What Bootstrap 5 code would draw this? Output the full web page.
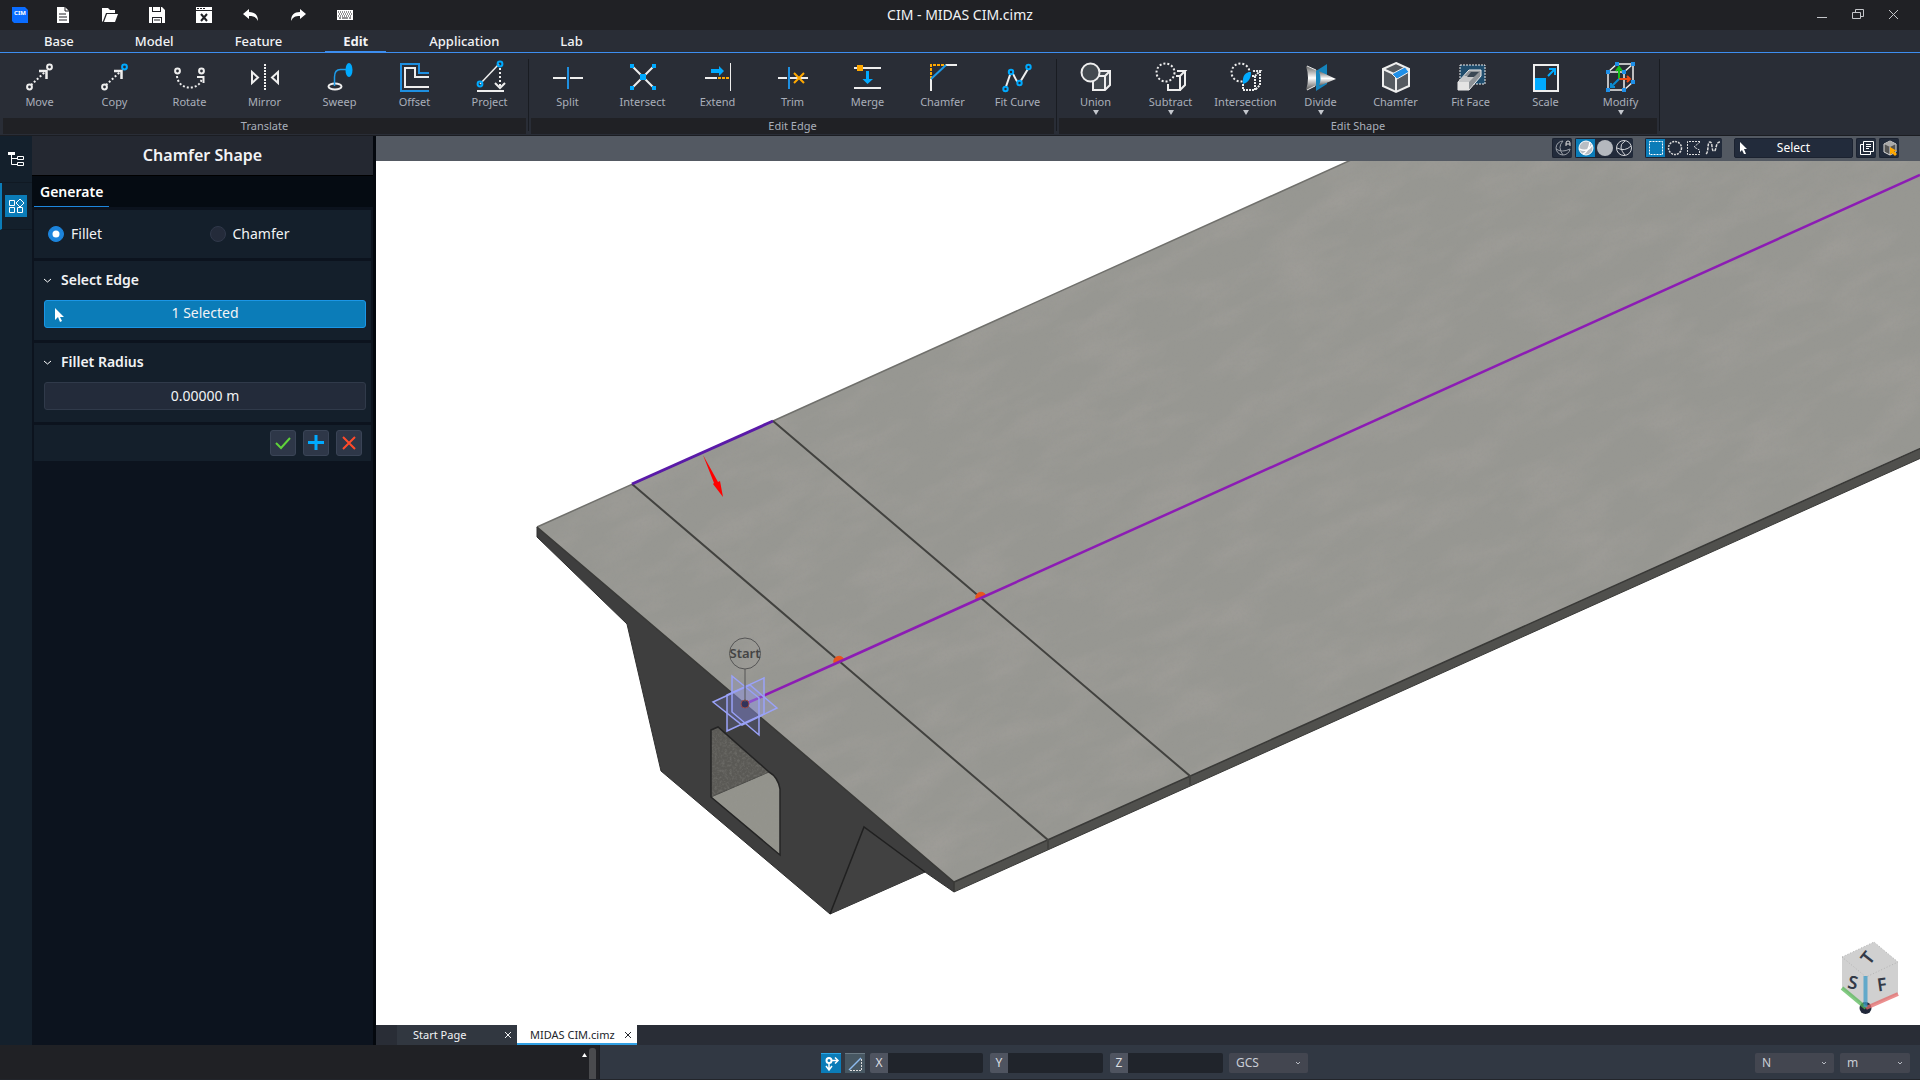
<!DOCTYPE html>
<html lang="en">
<head>
<meta charset="utf-8">
<meta name="viewport" content="width=device-width, initial-scale=1">
<title>CIM - MIDAS CIM.cimz</title>
<link rel="stylesheet" href="https://cdn.jsdelivr.net/npm/bootstrap@5.3.0/dist/css/bootstrap.min.css">
<style>
  body { font-family: "Noto Sans", "Open Sans", sans-serif; font-size: 14px; line-height: 20px; background: #0c131e; color: #f2f3f5; overflow: hidden; }
  button, input, select { font-family: inherit; }
  svg { display: block; overflow: visible; }
  .app-title { background: #202125; height: 30px; padding-left: 12px; }
  .app-title .btn, .win-controls .btn { border: 0; border-radius: 0; color: #fff; }
  .app-title .quick { width: 47px; }
  .quick-bar { margin-left: 11px; }
  .app-name { font-size: 14px; pointer-events: none; }
  .win-controls { padding-right: 8px; }
  .win-controls .btn { width: 36px; color: #c4c6ca; }
  .menu-bar { background: #292d36; height: 23px; padding-left: 26px; gap: 25px; border-bottom: 1px solid #3d8ef0; }
  .menu-bar .nav-link { color: #f2f3f5; padding: 0 18px; font-size: 13px; font-weight: 500; line-height: 22px; height: 22px; }
  .menu-bar .nav-link.active { font-weight: 700; box-shadow: 0 -1px 0 #3d8ef0 inset; }
  .ribbon { background: #292d36; height: 83px; padding: 6px 2px 0; border-bottom: 1px solid #1b1d22; }
  .ribbon-group { padding-right: 3px; background: linear-gradient(#191c22, #191c22) right 1px top 0 / 1px 72px no-repeat; }
  .tool { width: 75px; height: 59px; padding: 3px 0 0; border: 0; border-radius: 0; color: #a9afba; font-size: 11px; line-height: 16px; display: flex; flex-direction: column; align-items: center; justify-content: flex-start; }
  .tool:hover { background: #343a46; color: #fff; }
  .tool svg { margin-bottom: 2px; flex-shrink: 0; }
  .tool .drop { display: block; width: 0; border: 3px solid transparent; border-top: 5px solid #c4c7cd; border-bottom: 0; }
  .group-name { background: #202125; color: #a9afba; font-size: 11px; line-height: 16px; height: 16px; margin: 0 1px; }
  .work { min-height: 0; }
  .rail { width: 32px; background: #14202c; }
  .rail .btn { height: 47px; width: 32px; padding: 0; border: 0; border-bottom: 1px solid #101923; border-radius: 0; color: #fff; display: flex; align-items: center; justify-content: center; }
  .rail .active { border-left: 2px solid #0b7cb8; padding-right: 2px; background: transparent; }
  .rail .tile { background: #0b7cb8; padding: 3px; }
  .side { width: 344px; background: #0c131e; border-right: 3px solid #04080e; }
  .side-title { background: #242831; height: 40px; border-bottom: 1px solid #000; font-size: 16px; line-height: 38px; font-weight: 600; }
  .side-tabs { background: #050b12; height: 31px; padding-left: 2px; }
  .side-tabs .nav-link { color: #fff; font-weight: 600; padding: 0 7px 0 6px; width: 75px; line-height: 32px; height: 31px; border-bottom: 1px solid #1e86dc; }
  .panel-stack { gap: 3px; padding: 3px 2px 0; }
  .pane { background: #141f2b; padding: 9px 5px 12px 10px; }
  .pane.kinds { padding: 0 0 0 14px; height: 48px; }
  .pane.actions { gap: 7px; padding: 5px 9px; }
  .pane-head { font-weight: 600; font-size: 14px; line-height: 20px; color: #f2f3f5; gap: 10px; margin-bottom: 10px; }
  .pane .form-check-input { width: 16px; height: 16px; margin: 0; background-color: #242b3a; border: 1px solid #30384a; box-shadow: none; }
  .pane .form-check-input:checked { background-color: #1c84dc; border-color: #1c84dc; }
  .opt { width: 162px; gap: 7px; }
  .field { height: 28px; font-size: 14px; line-height: 20px; padding: 2px 8px 4px; border-radius: 3px; color: #f2f3f5; }
  .pick { background: #0b7cb8; border: 1px solid #1b96e6; }
  .pick:hover { background: #0d86c6; color: #fff; }
  .pick svg { position: absolute; left: 8px; top: 6px; }
  .value-box, .value-box:focus { background: #232b3a; border: 1px solid #303a4a; color: #f2f3f5; box-shadow: none; }
  .act { width: 26px; height: 26px; padding: 0; background: #2e3748; border: 1px solid #3a4456; border-radius: 3px; display: flex; align-items: center; justify-content: center; }
  .view-bar { background: #535962; height: 25px; padding: 2px 21px 3px 0; gap: 3px; }
  .chipset { background: #222b3b; border: 1px solid #1b2230; border-right: 0; border-radius: 2px; height: 20px; }
  .chipset.spaced { margin-right: 9px; }
  .chipset .btn { width: 19px; height: 18px; padding: 0; border: 0; border-radius: 0; display: flex; align-items: center; justify-content: center; color: #d8dade; }
  .chipset .btn.active { background: #0b7cb8; }
  .mode { width: 119px; height: 20px; padding: 0; background: #222b3b; border: 1px solid #1b2230; border-radius: 2px; color: #fff; font-size: 12px; line-height: 16px; }
  .mode svg { position: absolute; left: 4px; top: 3px; }
  .canvas-col { min-width: 0; }
  .canvas { background: #fff; min-height: 0; }
  .canvas .model { position: absolute; inset: 0; width: 100%; height: 100%; }
  .canvas .compass { position: absolute; right: 20px; bottom: 10px; }
  .doc-tabs { background: #292d36; height: 20px; padding-left: 21px; }
  .doc { font-size: 11px; line-height: 20px; height: 20px; width: 120px; padding: 0 5px 0 16px; background: #313740; color: #f2f3f5; }
  .doc a { color: inherit; text-decoration: none; }
  .doc.current { background: #fff; color: #22252b; box-shadow: 0 -2px 0 #31a0e4 inset; padding-left: 13px; }
  .doc .btn { padding: 0; border: 0; color: inherit; line-height: 0; }
  .status { height: 35px; background: #313843; border-bottom: 1px solid #22252b; }
  .status-tools { padding-left: 221px; }
  .console { width: 600px; background: #202125; padding: 3px 3px 0 0; border-right: 1px solid #1b1d22; gap: 2px; }
  .console .thumb { width: 7px; border-radius: 3px 3px 0 0; background: #4a4b4e; }
  .snap { width: 20px; height: 20px; padding: 0; border: 0; border-top: 1px solid #6b7a84; border-radius: 0; background: #475762; display: flex; align-items: center; justify-content: center; }
  .snap.active { background: #0b7cb8; border-color: #2aa6e6; }
  .axes { gap: 7px; margin: 0 6px 0 5px; }
  .axis { width: 113px; height: 20px; }
  .axis label { width: 18px; background: #4f5460; font-size: 12px; line-height: 20px; text-align: center; border-radius: 2px 0 0 2px; color: #dcdee2; flex-shrink: 0; }
  .axis .form-control { background: #20242b; border: 0; padding: 0 4px; min-height: 0; color: #fff; font-size: 12px; border-radius: 0 2px 2px 0; }
  .unit { --bs-form-select-bg-img: url("data:image/svg+xml,%3csvg xmlns='http://www.w3.org/2000/svg' viewBox='0 0 6 4'%3e%3cpath fill='none' stroke='%23b9bcc4' d='M1 1l2 2 2-2'/%3e%3c/svg%3e"); height: 20px; width: 79px; padding: 0 16px 0 7px; background-color: #434650; background-position: right 7px center; background-size: 6px 4px; border: 0; border-radius: 2px; color: #c9cdd5; font-size: 12px; line-height: 18px; }
  .unit.short { width: 70px; margin: 0 10px 0 6px; }
</style>
</head>
<body>
<div class="d-flex flex-column vh-100">

  <header class="app-title d-flex align-items-stretch position-relative">
    <svg class="align-self-center" width="16" height="16" viewBox="0 0 16 16"><path d="M0 0h13l3 3v13H2l-2-2z" fill="#0a6cff"/><text x="8" y="8" font-size="6" font-weight="700" fill="#fff" text-anchor="middle">CIM</text></svg>
    <div class="d-flex position-absolute start-0 end-0 justify-content-center align-items-center h-100 app-name">CIM - MIDAS CIM.cimz</div>
    <div class="quick-bar d-flex">
      <button class="btn quick p-0" aria-label="New"><svg class="mx-auto" width="16" height="16"><path d="M2 0h8l4 4v12H2z" fill="#fff"/><path d="M10 0v4h4M4 7h7M4 10h8M4 13h8" stroke="#202125" fill="none"/></svg></button>
      <button class="btn quick p-0" aria-label="Open"><svg class="mx-auto" width="16" height="16"><path d="M0 15V1h6l2 2h5v3H4L1 14z" fill="#fff"/><path d="M5 7h11l-3 8H2z" fill="#fff"/></svg></button>
      <button class="btn quick p-0" aria-label="Save"><svg class="mx-auto" width="16" height="16"><path d="M0 0h3v5h9V0h1l3 3v13h-3v-6H3v6H0z" fill="#fff"/><path d="M4 0h7v4H4zM4 11h8v5H4z" fill="#fff"/><path d="M5 13h6" stroke="#202125"/></svg></button>
      <button class="btn quick p-0" aria-label="Close file"><svg class="mx-auto" width="16" height="16"><path d="M0 0h16v3H0zM0 4h16v12H0z" fill="#fff"/><path d="M1 1.500h2M4 1.500h2M7 1.500h2" stroke="#202125"/><path d="M5 7l6 7M11 7l-6 7" stroke="#202125" stroke-width="2"/></svg></button>
      <button class="btn quick p-0" aria-label="Undo"><svg class="mx-auto" width="16" height="16"><path d="M0 7l6-5v3c6 0 9 3 9 9-2-4-4-5-9-5v3z" fill="#fff"/></svg></button>
      <button class="btn quick p-0" aria-label="Redo"><svg class="mx-auto" width="16" height="16"><path d="M16 7l-6-5v3C4 5 1 8 1 14c2-4 4-5 9-5v3z" fill="#fff"/></svg></button>
      <button class="btn quick p-0" aria-label="Keyboard"><svg class="mx-auto" width="16" height="16"><path d="M0 3h16v10H0z" fill="#fff"/><path d="M1 5h14M2 7h13M1 9h14" stroke="#202125" stroke-dasharray="1 1"/><path d="M2 11h2M5 11h6M12 11h2" stroke="#202125"/></svg></button>
    </div>
    <div class="win-controls d-flex ms-auto">
      <button class="btn p-0" aria-label="Minimize"><svg class="mx-auto" width="12" height="12"><path d="M1 8.500h10" stroke="currentColor"/></svg></button>
      <button class="btn p-0" aria-label="Restore"><svg class="mx-auto" width="12" height="12"><path d="M3.500 3.500v-3h8v7h-3M.5 3.500h8v6h-8z" fill="none" stroke="currentColor"/></svg></button>
      <button class="btn p-0" aria-label="Close"><svg class="mx-auto" width="12" height="12"><path d="M1 1l9 9M10 1l-9 9" stroke="currentColor"/></svg></button>
    </div>
  </header>

  <nav class="menu-bar nav flex-nowrap">
    <a class="nav-link" href="#">Base</a>
    <a class="nav-link" href="#">Model</a>
    <a class="nav-link" href="#">Feature</a>
    <a class="nav-link active" href="#" aria-current="page">Edit</a>
    <a class="nav-link" href="#">Application</a>
    <a class="nav-link" href="#">Lab</a>
  </nav>

  <section class="ribbon d-flex" aria-label="Edit tools">
    <div class="ribbon-group">
      <div class="d-flex">
        <button class="btn tool"><svg width="30" height="30" fill="none" stroke="#eee" stroke-width="2"><path d="M6 23L20 10" stroke-dasharray="2 2"/><circle cx="4.500" cy="25" r="2.400"/><circle cx="24.500" cy="5" r="2.400"/><path d="M14 9h7.500v8" stroke-width="2.500"/></svg>Move</button>
        <button class="btn tool"><svg width="30" height="30" fill="none" stroke="#eee" stroke-width="2"><path d="M6 23L20 10" stroke-dasharray="2 2"/><circle cx="4.500" cy="25" r="2.400"/><circle cx="24.500" cy="5" r="2.400" stroke="#00aaff"/><path d="M14 9h7.500v8" stroke-width="2.500"/></svg>Copy</button>
        <button class="btn tool"><svg width="30" height="30" fill="none" stroke="#eee" stroke-width="2"><circle cx="2.500" cy="9" r="2.400"/><circle cx="26.500" cy="9" r="2.400"/><path d="M2 14c1 15 23 15 25 2" stroke-dasharray="2 2"/><path d="M22 15h6.500v6" /></svg>Rotate</button>
        <button class="btn tool"><svg width="30" height="30" fill="none" stroke="#eee" stroke-width="2"><path d="M15 2v27" stroke-dasharray="2 1"/><path d="M2 10v11l6-5.500zM28 10v11l-6-5.500z"/></svg>Mirror</button>
        <button class="btn tool"><svg width="30" height="30" fill="none" stroke="#eee"><ellipse cx="10" cy="24.500" rx="6.500" ry="3" stroke-width="2"/><path d="M9.500 24V15q0-7.500 6-7.500h6" stroke="#1e9be8" stroke-width="1.500"/><ellipse cx="24" cy="8" rx="3.500" ry="7" fill="#00aaff" stroke="none"/></svg>Sweep</button>
        <button class="btn tool"><svg width="30" height="30" fill="none" stroke="#eee" stroke-width="2"><path d="M29 29H1V2h18v9h10" stroke="#1e8fe0"/><path d="M29 25H5V6h10v9h14"/></svg>Offset</button>
        <button class="btn tool"><svg width="30" height="30" fill="none" stroke="#eee" stroke-width="2"><path d="M5 22L24 2" stroke-width="1.500"/><circle cx="5" cy="22" r="2.400" stroke="#00aaff"/><circle cx="25" cy="2" r="2.400" stroke="#00aaff"/><path d="M25 6v20" stroke-dasharray="2 2"/><path d="M20 21l5 5 5-5M2 29h27"/></svg>Project</button>
      </div>
      <div class="group-name text-center">Translate</div>
    </div>
    <div class="ribbon-group">
      <div class="d-flex">
        <button class="btn tool"><svg width="30" height="30" stroke="#eee" stroke-width="2"><path d="M0 16h13M17 16h13"/><path d="M15 5v22" stroke="#1e8fe0"/></svg>Split</button>
        <button class="btn tool"><svg width="30" height="30" stroke="#eee" stroke-width="2"><path d="M4 4l22 22M26 4L4 26"/><path d="M2 2h4v4H2zM24 2h4v4h-4zM2 24h4v4H2zM24 24h4v4h-4zM12 12h6v6h-6z" fill="#00aaff" stroke="none"/></svg>Intersect</button>
        <button class="btn tool"><svg width="30" height="30" stroke="#eee" stroke-width="2"><path d="M2 16h12"/><path d="M27.500 1v28" stroke-width="1"/><path d="M15 16h12" stroke="#ffa800" stroke-dasharray="3 1"/><path d="M8 7h8V4l5 5-5 5v-3H8z" fill="#00aaff" stroke="none"/></svg>Extend</button>
        <button class="btn tool"><svg width="30" height="30" stroke="#eee" stroke-width="2"><path d="M0 16h9M12 16h18"/><path d="M11 5v22" stroke="#1e8fe0"/><path d="M16 11l10 10M26 11L16 21" stroke="#ffa800"/></svg>Trim</button>
        <button class="btn tool"><svg width="30" height="30" stroke="#eee" stroke-width="2"><path d="M1 6h27M1 26h27"/><path d="M4 3h6v6H4z" fill="#ffa800" stroke="none"/><path d="M13 9h3v8h4l-5.500 5-5-5H13z" fill="#00aaff" stroke="none"/></svg>Merge</button>
        <button class="btn tool"><svg width="30" height="30" fill="none" stroke="#eee" stroke-width="2"><path d="M3 17V3h15" stroke="#ffa800" stroke-dasharray="3 1"/><path d="M18 3h11M3 17v12"/><path d="M3 17L18 3" stroke="#1e9be8"/></svg>Chamfer</button>
        <button class="btn tool"><svg width="30" height="30" fill="none" stroke="#00aaff" stroke-width="2"><path d="M2.500 26L8 10c3 0 4 10 8.500 11L25.500 6" stroke="#eee"/><g fill="#292d36"><circle cx="2.500" cy="27" r="2.200"/><circle cx="8" cy="10" r="2.200"/><circle cx="16.500" cy="21" r="2.200"/><circle cx="25.500" cy="5" r="2.200"/></g></svg>Fit Curve</button>
      </div>
      <div class="group-name text-center">Edit Edge</div>
    </div>
    <div class="ribbon-group">
      <div class="d-flex">
        <button class="btn tool"><svg width="30" height="30" fill="#444a50" stroke="#eee" stroke-width="2"><path d="M12 14l5-5h12v14l-5 5H12zM12 14h12v14M24 14l5-5"/><circle cx="9.500" cy="10.500" r="9"/></svg>Union<span class="drop"></span></button>
        <button class="btn tool"><svg width="30" height="30" fill="none" stroke="#eee" stroke-width="2"><path d="M12 22v6h12V14h-4M24 14l5-5h-8M29 9v14l-5 5"/><circle cx="9.500" cy="10.500" r="9" stroke-dasharray="2 2"/></svg>Subtract<span class="drop"></span></button>
        <button class="btn tool"><svg width="30" height="30" fill="none" stroke="#eee" stroke-width="2"><path d="M12 22v6h12V14h-4M24 14l5-5h-8M29 9v14l-5 5" stroke-dasharray="2 1"/><circle cx="9.500" cy="10.500" r="9" stroke-dasharray="2 2"/><path d="M12 22c-1-8 2-12 8-12 0 6-2 10-8 12z" fill="#00aaff" stroke="none"/></svg>Intersection<span class="drop"></span></button>
        <button class="btn tool"><svg width="30" height="30"><defs><linearGradient id="cone" x2="0" y2="1"><stop offset="0" stop-color="#666"/><stop offset=".5" stop-color="#fff"/><stop offset="1" stop-color="#555"/></linearGradient></defs><path d="M0 4l12 5v14L0 28Q4 16 0 4z" fill="url(#cone)"/><path d="M10 9l11-7v20l-11 7z" fill="#1584bd"/><path d="M13 9l17 8-17 7q3-7 0-15z" fill="url(#cone)"/><path d="M1 4l9 4M1 28l8-4" stroke="#eee"/></svg>Divide<span class="drop"></span></button>
        <button class="btn tool"><svg width="30" height="30" fill="#555a60" stroke="#eee" stroke-width="2"><path d="M15 1l13 6v17l-13 6-13-6V7z"/><path d="M2 7l13 6v17M15 13l13-6" fill="none"/><path d="M11 12L24 5l4 5-12 7z" fill="#1e8fe8" stroke-width="1"/></svg>Chamfer</button>
        <button class="btn tool"><svg width="30" height="30"><path d="M4 3h25v19H4z" fill="#204d6d" stroke="#eee" stroke-dasharray="2 1"/><path d="M2 20L13 8h12v6L13 28H2z" fill="#8d9297" stroke="#eee"/><path d="M2 20h11v8H2z" fill="#e4e4e4"/><path d="M2 20l6-6h11l-6 6z" fill="#c6c8ca"/><path d="M15 10h8l-5 5h-7z" fill="#394754"/></svg>Fit Face</button>
        <button class="btn tool"><svg width="30" height="30" fill="none" stroke="#eee" stroke-width="2"><path d="M3 3h24v26H3z"/><path d="M4 16h11v12H4z" fill="#00aaff" stroke="none"/><path d="M17 14l7-7M18 7h6v6" stroke="#00aaff"/></svg>Scale</button>
        <button class="btn tool"><svg width="30" height="30" fill="none" stroke="#eee" stroke-width="1.500"><path d="M2 10h16v18H2zM2 10l9-8h16l-9 8M27 2v18l-9 8"/><path d="M13 17V6M10 9l3-4 3 4" stroke="#18c018" stroke-width="2"/><path d="M13 17h10M21 14l3 3-3 3" stroke="#f04a14" stroke-width="2"/><path d="M13 17l-8 8M5 21v4h4" stroke="#0b8bd0" stroke-width="2"/><path d="M0 8h4v4H0zM16 8h4v4h-4zM9 0h4v4H9zM25 0h4v4h-4zM0 26h4v4H0zM16 26h4v4h-4zM25 18h4v4h-4z" fill="#1e8fe8" stroke="none"/></svg>Modify<span class="drop"></span></button>
      </div>
      <div class="group-name text-center">Edit Shape</div>
    </div>
  </section>

  <main class="work d-flex flex-grow-1">
    <nav class="rail flex-shrink-0">
      <button class="btn" aria-label="Tree"><svg width="16" height="16" fill="none" stroke="#fff"><path d="M0 1h7v3H0z" fill="#fff" stroke="none"/><path d="M3.500 4v9.500H9M3.500 7.500H9M9.500 5.500h6v3h-6zM9.500 11.500h6v3h-6z"/></svg></button>
      <button class="btn active" aria-label="Functions"><span class="tile"><svg width="16" height="16" fill="none" stroke="#fff"><path d="M1.500 2.500h5v5h-5zM1.500 9.500h5v5h-5zM9.500 9.500h5v5h-5zM12 1l4 4-4 4-4-4z"/></svg></span></button>
    </nav>

    <aside class="side flex-shrink-0">
      <h1 class="side-title text-center m-0">Chamfer Shape</h1>
      <nav class="side-tabs nav"><a class="nav-link active" href="#">Generate</a></nav>
      <form class="panel-stack d-flex flex-column" onsubmit="return false">
        <div class="pane kinds d-flex align-items-center">
          <div class="opt d-flex align-items-center"><input class="form-check-input" type="radio" name="kind" id="fillet" checked><label for="fillet">Fillet</label></div>
          <div class="opt d-flex align-items-center"><input class="form-check-input" type="radio" name="kind" id="chamfer"><label for="chamfer">Chamfer</label></div>
        </div>
        <div class="pane">
          <div class="pane-head d-flex align-items-center"><svg width="7" height="5"><path d="M0 1l3.500 3L7 1" fill="none" stroke="#fff"/></svg><span>Select Edge</span></div>
          <button class="btn field pick w-100 position-relative"><svg width="12" height="16"><path d="M2 1v12l3-3 2 5 2-1-2-4h4z" fill="#fff"/></svg>1 Selected</button>
        </div>
        <div class="pane">
          <label class="pane-head d-flex align-items-center" for="radius"><svg width="7" height="5"><path d="M0 1l3.500 3L7 1" fill="none" stroke="#fff"/></svg><span>Fillet Radius</span></label>
          <input class="form-control field value-box text-center" id="radius" value="0.00000 m">
        </div>
        <div class="pane actions d-flex justify-content-end">
          <button class="btn act" aria-label="Apply"><svg width="16" height="14"><path d="M1 7l5 5 9-10" fill="none" stroke="#5fd23a" stroke-width="2"/></svg></button>
          <button class="btn act" aria-label="Add"><svg width="16" height="16"><path d="M8 0v15M0 7.500h16" stroke="#00aaff" stroke-width="3"/></svg></button>
          <button class="btn act" aria-label="Cancel"><svg width="14" height="14"><path d="M1 1l12 12M13 1L1 13" stroke="#ff4a2a" stroke-width="2"/></svg></button>
        </div>
      </form>
    </aside>

    <section class="canvas-col d-flex flex-column flex-grow-1">
      <div class="view-bar d-flex justify-content-end align-items-start">
        <div class="chipset d-flex"><button class="btn" aria-label="Auto shading"><svg width="16" height="16" fill="none" stroke="#9ba0a8"><path d="M8 1a7 7 0 1 0 7 8M8 1q-6 6 0 14M1 9q6 4 14 0"/><path d="M11 6V3q0-2 2-2t2 2v3M11 4h4" stroke="#ddd"/></svg></button></div>
        <div class="chipset spaced d-flex">
          <button class="btn active" aria-label="Shaded with edges"><svg width="16" height="16" fill="#b9bec4" stroke="#fff"><circle cx="8" cy="8" r="7"/><path d="M12 2q-1 9-7 12M1 9q9 4 13-4" fill="none" stroke-width="1.500"/></svg></button>
          <button class="btn" aria-label="Shaded"><svg width="16" height="16"><circle cx="8" cy="8" r="8" fill="#b4b8be"/></svg></button>
          <button class="btn" aria-label="Wireframe"><svg width="16" height="16" fill="none" stroke="#d0d2d6"><circle cx="8" cy="8" r="7.500"/><path d="M9 1q-5 3-4 7t4 7M1 8q8 4 14-2"/></svg></button>
        </div>
        <div class="chipset spaced d-flex">
          <button class="btn active" aria-label="Rectangle select"><svg width="16" height="16"><path d="M1.500 1.500h13v13h-13z" fill="none" stroke="#fff" stroke-dasharray="2 1"/></svg></button>
          <button class="btn" aria-label="Circle select"><svg width="16" height="16"><circle cx="8" cy="8" r="6.500" fill="none" stroke="#ddd" stroke-width="1.500" stroke-dasharray="2 1"/></svg></button>
          <button class="btn" aria-label="Polygon select"><svg width="16" height="16"><path d="M14 1.500H1.500v13h12V10L8 7l6-5" fill="none" stroke="#ddd" stroke-dasharray="2 1"/></svg></button>
          <button class="btn" aria-label="Curve select"><svg width="16" height="16"><path d="M1 14c3-2 1-12 4-12s1 9 4 9 1-9 6-9" fill="none" stroke="#ddd" stroke-width="1.500" stroke-dasharray="3 1"/></svg></button>
        </div>
        <button class="btn mode position-relative"><svg width="9" height="13"><path d="M1 0v10l2-2 2 4h2L5 7h3z" fill="#fff"/></svg>Select</button>
        <div class="chipset d-flex"><button class="btn" aria-label="Windows"><svg width="16" height="16" fill="none" stroke="#fff"><path d="M4.500 1.500h10v10h-10zM7 4.500h5M7 6.500h5M7 8.500h3M4 4.500H1.500v10h10V12"/></svg></button></div>
        <div class="chipset d-flex"><button class="btn" aria-label="Object filter"><svg width="16" height="16"><path d="M8 1l6 3v8l-6 3-6-3V4z" fill="#555" stroke="#ddd"/><path d="M2 4l6 3 6-3L8 1z" fill="#aaa"/><path d="M8 7v8" stroke="#ddd"/><path d="M8 7v8l2-2 3 3 2-2-3-3h3z" fill="#ffa800"/></svg></button></div>
      </div>

      <div class="canvas position-relative flex-grow-1 overflow-hidden">
        <svg class="model" viewBox="376 161 1544 864" preserveAspectRatio="xMinYMin slice" role="img" aria-label="Bridge deck model">
          <defs>
            <filter id="grain" x="0" y="0" width="100%" height="100%">
              <feTurbulence type="fractalNoise" baseFrequency=".4" numOctaves="3" seed="4"/>
              <feColorMatrix values="0 0 0 0 .3  0 0 0 0 .3  0 0 0 0 .28  .7 0 0 0 -.3"/>
              <feComposite in2="SourceGraphic" operator="in"/>
            </filter>
            <filter id="veins" x="0" y="0" width="100%" height="100%">
              <feTurbulence type="fractalNoise" baseFrequency=".014 .04" numOctaves="4" seed="9"/>
              <feColorMatrix values="0 0 0 0 .42  0 0 0 0 .39  0 0 0 0 .37  .6 0 0 0 -.24"/>
              <feComposite in2="SourceGraphic" operator="in"/>
            </filter>
            <path id="deck" d="M537 527L773 421L1351 160H1920V448L954 882z"/>
            <clipPath id="deckClip"><use href="#deck"/></clipPath>
          </defs>
          <!-- girder front face -->
          <path d="M537 527v10l90 87 34 147 169 143 95-42 29 20v-10z" fill="#3e3e3e" stroke="#303030"/>
          <path d="M830 914l34-87 61 45" fill="#414141" stroke="#202020" stroke-width="1.500"/>
          <!-- inner void -->
          <path d="M711 730l7-3 51 45-58 25z" fill="#5a5955"/>
          <path d="M711 797l58-25q9 5 11 17v66z" fill="#93938c"/>
          <path d="M711 797l58-25" stroke="#4c4c49"/>
          <path d="M711 730l7-3 51 45q9 5 11 17v66l-69-58z" fill="#000" filter="url(#grain)"/>
          <path d="M711 730l7-3 51 45q9 5 11 17v66l-69-58z" fill="none" stroke="#242424" stroke-width="1.500"/>
          <!-- deck edge and top surface -->
          <path d="M954 882L1930 444v10L954 892z" fill="#50504d" stroke="#3a3a38"/>
          <use href="#deck" fill="#979792"/>
          <g clip-path="url(#deckClip)"><rect x="300" y="-500" width="2200" height="2000" fill="#000" filter="url(#veins)" transform="rotate(-24 1200 500)"/></g>
          <use href="#deck" filter="url(#grain)"/>
          <path d="M537 527L773 421L1351 160" stroke="#70706c" stroke-width="1.500" fill="none"/>
          <path d="M537 527L954 882L1930 444M954 882v10" stroke="#3a3a38" stroke-width="1.500" fill="none"/>
          <path d="M632 484L839 661L1048 840v9M773 421L981 598L1190 776v9" stroke="#42423f" stroke-width="2" fill="none"/>
          <path d="M632 484L773 421" stroke="#5a1aa8" stroke-width="3"/>
          <path d="M834 663a5 5 0 0 1 10-3zM976 599a5 5 0 0 1 10-3z" fill="#e8541c" stroke="#e8541c"/>
          <path d="M745 704L839 662L981 598L1920 175" stroke="#8c1cb4" stroke-width="2.500" fill="none"/>
          <path d="M703 455l11 28-1 1 10 13-3-16-2 1z" fill="#f00"/>
          <!-- start marker -->
          <g fill="#8f96f0" fill-opacity=".18" stroke="#9aa2f8" stroke-width="1.500"><path d="M713 702l37-17 27 23-35 17z"/><path d="M732 676l27 22v37l-27-23z"/><path d="M727 695l37-17v36l-37 17z"/></g>
          <circle cx="745" cy="704" r="4" fill="#33335a" stroke="#9a4b46"/>
          <path d="M745 669v33" stroke="#555"/>
          <circle cx="745" cy="653.500" r="15.500" fill="none" stroke="#555"/>
          <text x="745" y="658" text-anchor="middle" font-size="13" font-weight="600" fill="#444">Start</text>
        </svg>
        <svg class="compass" width="60" height="76" viewBox="1840 939 60 76" role="img" aria-label="View cube">
          <path d="M1842 957l32-15 24 20v32l-32 14-24-20z" fill="#d0d0d0"/>
          <path d="M1842 957l24 20 32-15M1842 957l32-15 24 20" fill="none" stroke="#b4b4b4" stroke-dasharray="1 2"/>
          <g fill="#333a48" font-weight="600" font-size="18" text-anchor="middle"><text x="1853" y="989" transform="rotate(12 1853 982)">S</text><text x="1882" y="991" transform="rotate(-8 1882 985)">F</text><text x="1868" y="964" transform="rotate(-52 1868 958)">T</text></g>
          <circle cx="1865.500" cy="1008" r="6" fill="#20283a"/>
          <path d="M1842 988l24 20" stroke="#58b858" stroke-opacity=".75" stroke-width="4"/><path d="M1866 1008l32-14" stroke="#e46a6a" stroke-opacity=".75" stroke-width="4"/><path d="M1865.500 976v31" stroke="#3c9cc8" stroke-opacity=".75" stroke-width="4"/>
        </svg>
      </div>

      <div class="doc-tabs d-flex">
        <div class="doc d-flex justify-content-between align-items-center"><a href="#">Start Page</a><button class="btn" aria-label="Close Start Page"><svg width="8" height="8"><path d="M1 1l6 6M7 1L1 7" stroke="currentColor"/></svg></button></div>
        <div class="doc current d-flex justify-content-between align-items-center"><a href="#">MIDAS CIM.cimz</a><button class="btn" aria-label="Close MIDAS CIM.cimz"><svg width="8" height="8"><path d="M1 1l6 6M7 1L1 7" stroke="currentColor"/></svg></button></div>
      </div>
    </section>
  </main>

  <footer class="status d-flex flex-shrink-0">
    <div class="console d-flex justify-content-end flex-shrink-0"><svg class="mt-1" width="5" height="6"><path d="M0 5l2.500-4L5 5z" fill="#fff"/></svg><div class="thumb"></div></div>
    <div class="status-tools d-flex align-items-start pt-2 flex-grow-1">
      <button class="btn snap active" aria-label="Snap"><svg width="16" height="16" fill="none" stroke="#fff" stroke-width="2"><circle cx="6" cy="4.500" r="2.500"/><path d="M9 4.500h5" stroke-width="1.500"/><path d="M12 1.500l3 3-3 3M6 7v7M3 10l3 4 3-4" stroke-width="1.500"/></svg></button>
      <button class="btn snap ms-1" aria-label="Relative"><svg width="16" height="16" fill="none"><path d="M2 14L14 2" stroke="#8dbcf0" stroke-width="1.500"/><path d="M14.500 3v11.500H2" stroke="#ddd" stroke-dasharray="2 1"/></svg></button>
      <div class="axes d-flex">
        <div class="axis d-flex"><label for="ax">X</label><input class="form-control" id="ax"></div>
        <div class="axis d-flex"><label for="ay">Y</label><input class="form-control" id="ay"></div>
        <div class="axis d-flex"><label for="az">Z</label><input class="form-control" id="az"></div>
      </div>
      <select class="form-select unit" aria-label="Coordinate system"><option>GCS</option><option>UCS</option></select>
      <select class="form-select unit ms-auto" aria-label="Force unit"><option>N</option><option>kN</option></select>
      <select class="form-select unit short" aria-label="Length unit"><option>m</option><option>mm</option></select>
    </div>
  </footer>
</div>
<script src="https://cdn.jsdelivr.net/npm/bootstrap@5.3.0/dist/js/bootstrap.bundle.min.js"></script>
</body>
</html>
